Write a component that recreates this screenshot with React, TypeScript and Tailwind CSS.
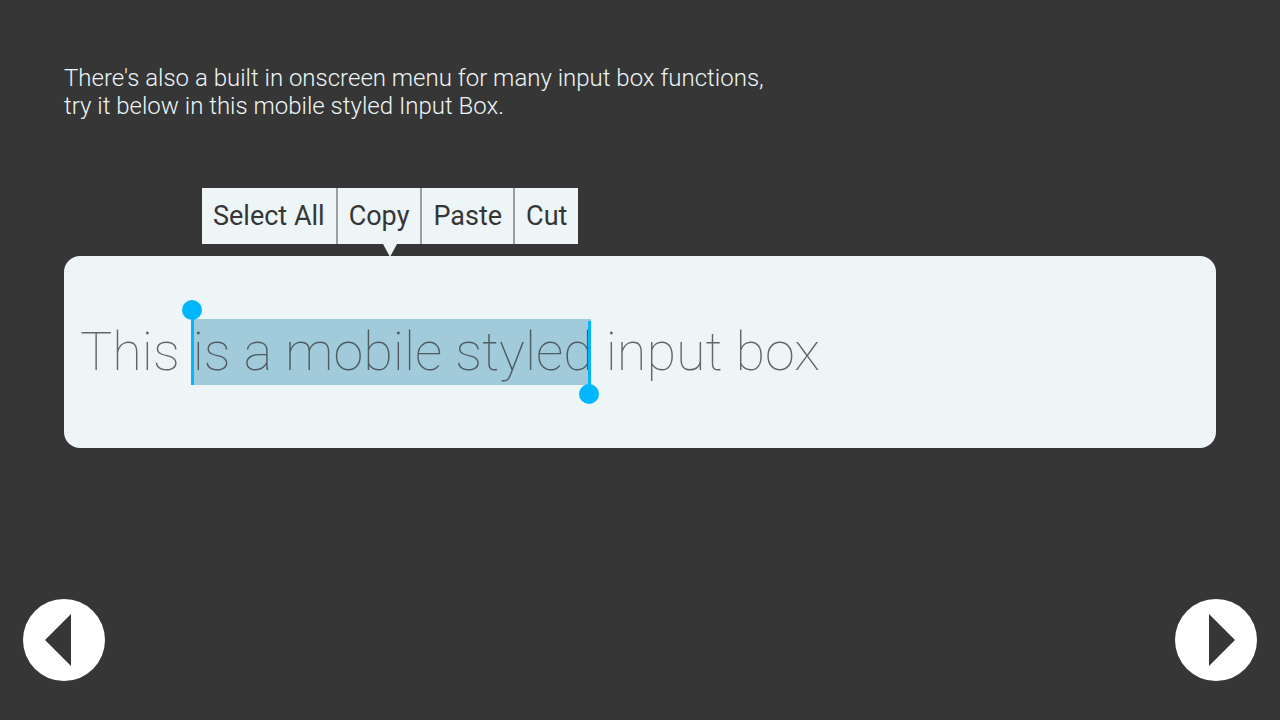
import { useState } from "react";

const actions = ["Select All", "Copy", "Paste", "Cut"];

export default function App() {
  const [value, setValue] = useState("This is a mobile styled input box");

  return (
    <main className="flex min-h-screen flex-col bg-[#363636] px-16 pt-16 font-['Roboto',sans-serif]">
      <p className="h-[124px] text-2xl leading-7 font-[350] text-[#edf5f7]">
        There's also a built in onscreen menu for many input box functions,
        <br />
        try it below in this mobile styled Input Box.
      </p>

      <div className="ml-[138px] flex h-[68px] flex-col self-start">
        <div role="toolbar" aria-label="Text actions" className="flex h-14 divide-x-2 divide-[#9a9fa1] bg-[#edf5f7]">
          {actions.map((action) => (
            <button key={action} type="button" className="px-[11px] text-[27px] text-[#363636]">
              {action}
            </button>
          ))}
        </div>
        <svg className="h-3 w-4 self-center" viewBox="0 0 16 12" aria-hidden="true">
          <path d="M1 0H15L8.5 12H7.5Z" fill="#edf5f7" />
        </svg>
      </div>

      <div className="relative rounded-2xl bg-[#edf5f7]">
        <div className="pointer-events-none absolute top-[63px] left-[127px] h-[66px] w-[400px] bg-[#a1cbdb]" />
        <input
          aria-label="Mobile styled input box"
          value={value}
          onChange={(e) => setValue(e.target.value)}
          className="relative block h-48 w-full rounded-2xl bg-transparent px-4 pb-0.5 text-[54px] font-thin text-[#363636]/75 outline-none"
        />
        <svg className="pointer-events-none absolute top-11 left-[118px] h-[104px] w-[417px]" viewBox="0 0 417 104" aria-hidden="true">
          <g fill="#00b7ff">
            <circle cx="10" cy="10" r="10" />
            <rect x="9" y="10" width="3" height="75" />
            <circle cx="407" cy="94" r="10" />
            <rect x="406" y="21" width="3" height="73" />
          </g>
        </svg>
      </div>

      <nav aria-label="Pages" className="-mx-[41px] mt-auto flex justify-between pb-[39px]">
        <button type="button" aria-label="Previous" className="size-[82px] rounded-full bg-white">
          <svg viewBox="0 0 82 82" aria-hidden="true">
            <path d="M48 15V67L22 41Z" fill="#363636" />
          </svg>
        </button>
        <button type="button" aria-label="Next" className="size-[82px] rounded-full bg-white">
          <svg viewBox="0 0 82 82" aria-hidden="true">
            <path d="M34 15V67L60 41Z" fill="#363636" />
          </svg>
        </button>
      </nav>
    </main>
  );
}
